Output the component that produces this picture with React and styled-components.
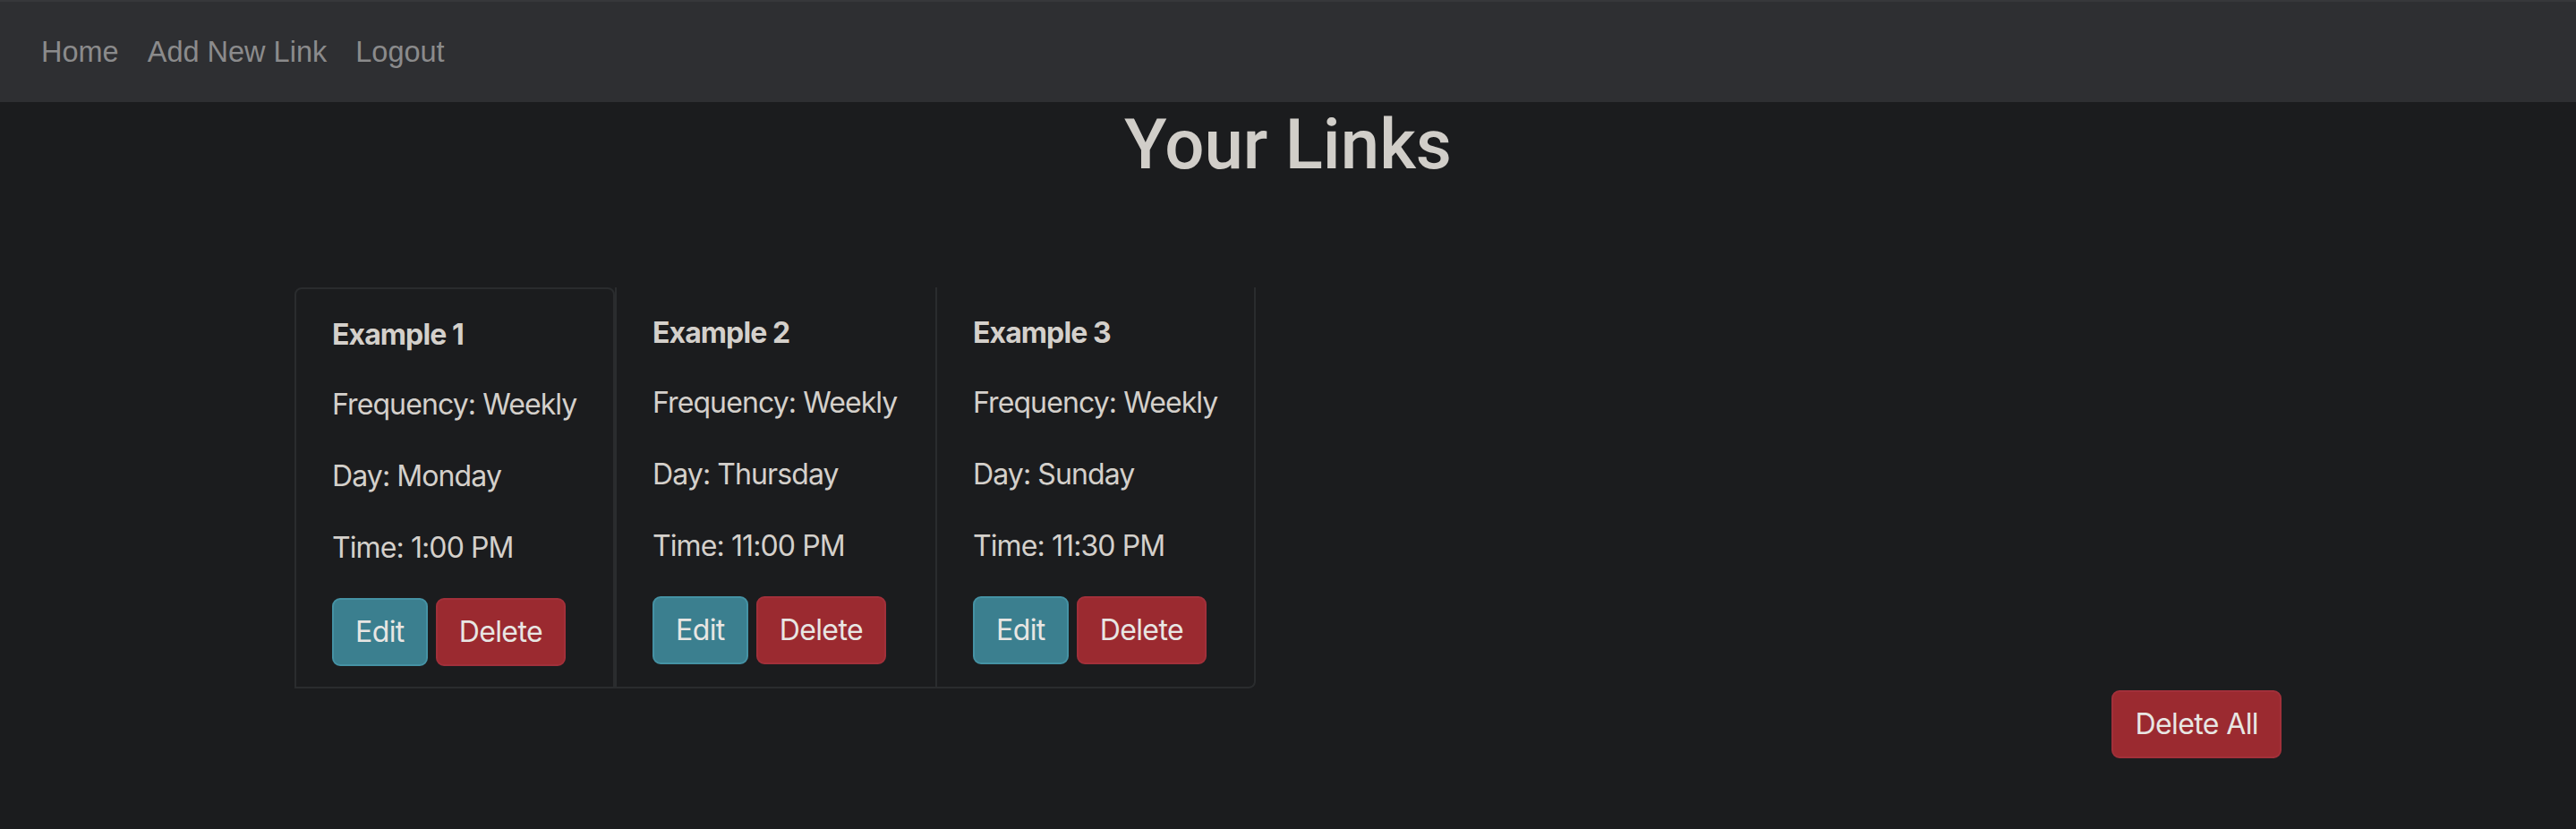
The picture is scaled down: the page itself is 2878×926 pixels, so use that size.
import React from "react";
import styled, { createGlobalStyle } from "styled-components";

const GlobalStyle = createGlobalStyle`
  html, body {
    margin: 0;
    padding: 0;
    background: #1b1c1e;
  }
  body {
    min-height: 926px;
    font-family: Inter, "Noto Sans", sans-serif;
    color: #d4d0cb;
  }
  * { box-sizing: border-box; }
`;

const NavBar = styled.nav`
  height: 114px;
  background: #2e2f32;
  border-top: 2px solid #37383b;
  display: flex;
  align-items: center;
  padding: 0 28px;
`;

const NavLink = styled.a`
  font-family: "Liberation Sans", Arial, sans-serif;
  font-size: 32.5px;
  line-height: 48px;
  color: #8b8b8c;
  padding: 0 16px;
  text-decoration: none;
  cursor: pointer;
  &:first-child { padding-left: 18px; }
`;

const Heading = styled.h1`
  font-family: Roboto, "Liberation Sans", sans-serif;
  font-size: 78px;
  font-weight: 500;
  line-height: 96px;
  text-align: center;
  color: #d1cec9;
  margin: 0 0 16px;
`;

const Container = styled.main`
  width: 2220px;
  margin: 0 auto;
`;

const CardRow = styled.section`
  display: flex;
  margin-top: 111px;
`;

const Card = styled.article`
  width: 358px;
  padding: 27px 40px 23px;
  border-color: #2a2c2e;
  border-style: solid;
  border-width: ${(p) => (p.$first ? "2px" : p.$last ? "0 2px 2px 2px" : "0 0 2px 2px")};
  border-radius: ${(p) => (p.$first ? "8px 8px 0 0" : p.$last ? "0 0 8px 0" : "0")};
`;

const Line = styled.p`
  margin: 0 0 ${(p) => (p.$bold ? "30px" : "32px")};
  font-size: 32px;
  line-height: 48px;
  letter-spacing: -0.9px;
  font-weight: ${(p) => (p.$bold ? 700 : 400)};
  white-space: nowrap;
`;

const Actions = styled.div`
  display: flex;
  gap: 9px;
`;

const Button = styled.button`
  font-family: Inter, "Noto Sans", sans-serif;
  font-size: 32px;
  line-height: 48px;
  letter-spacing: -0.6px;
  padding: 12px 24px;
  border-radius: 9px;
  border: 2px solid ${(p) => (p.$variant === "info" ? "#4592a4" : "#a2303a")};
  background: ${(p) => (p.$variant === "info" ? "#3b7f8f" : "#9b2a30")};
  color: #e8e6e3;
  cursor: pointer;
`;

const FooterRow = styled.div`
  display: flex;
  justify-content: flex-end;
  margin-top: 2px;
`;

const links = [
  { name: "Example 1", day: "Monday", time: "1:00 PM" },
  { name: "Example 2", day: "Thursday", time: "11:00 PM" },
  { name: "Example 3", day: "Sunday", time: "11:30 PM" },
];

export default function App() {
  return (
    <>
      <GlobalStyle />
      <NavBar>
        <NavLink>Home</NavLink>
        <NavLink>Add New Link</NavLink>
        <NavLink>Logout</NavLink>
      </NavBar>
      <Heading>Your Links</Heading>
      <Container>
        <CardRow>
          {links.map((l, i) => (
            <Card key={l.name} $first={i === 0} $last={i === links.length - 1}>
              <Line $bold>{l.name}</Line>
              <Line>Frequency: Weekly</Line>
              <Line>Day: {l.day}</Line>
              <Line>Time: {l.time}</Line>
              <Actions>
                <Button $variant="info">Edit</Button>
                <Button $variant="danger">Delete</Button>
              </Actions>
            </Card>
          ))}
        </CardRow>
        <FooterRow>
          <Button $variant="danger">Delete All</Button>
        </FooterRow>
      </Container>
    </>
  );
}
